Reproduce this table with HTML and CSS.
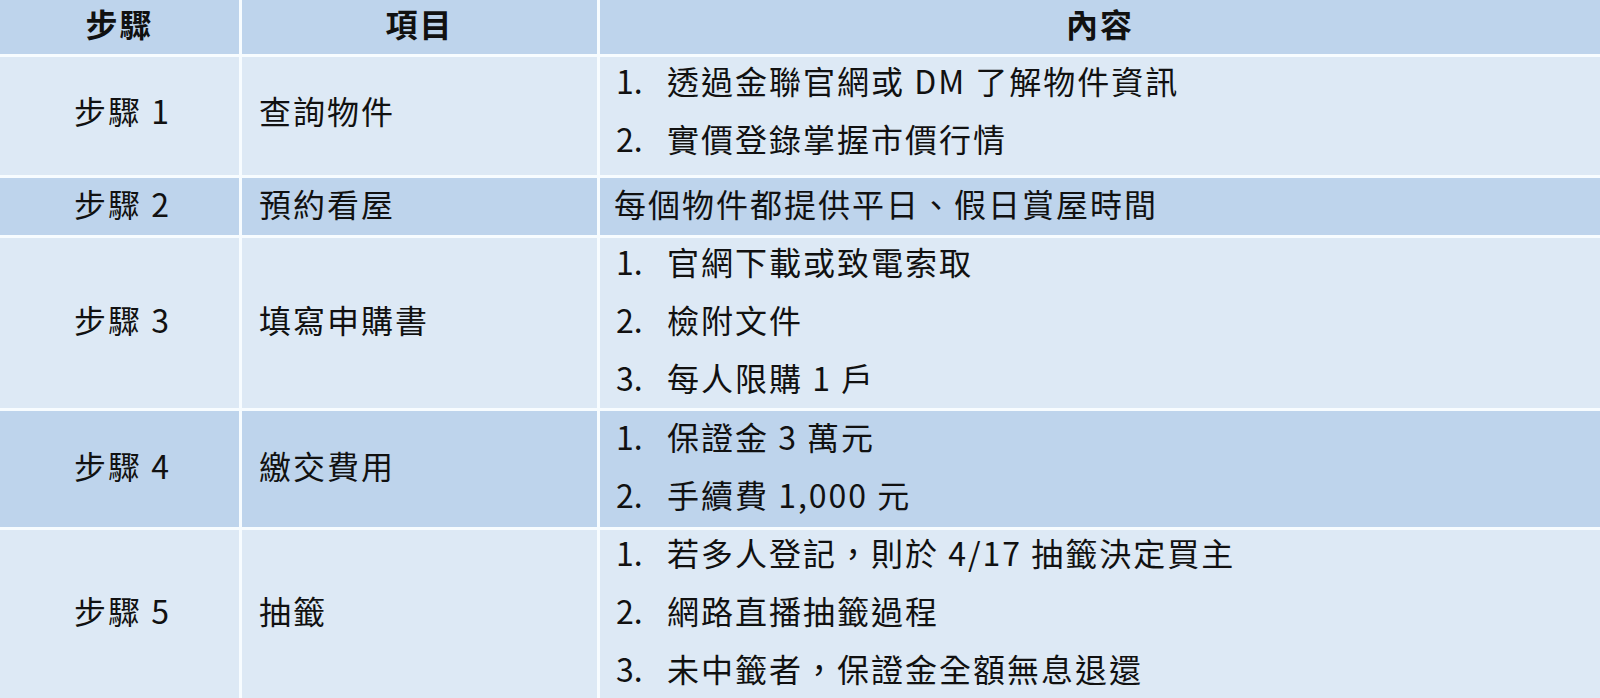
FILE: index.html
```html
<!DOCTYPE html>
<html lang="zh-Hant">
<head>
<meta charset="utf-8">
<title>步驟</title>
<link rel="stylesheet" href="styles.css">
</head>
<body>
<div class="table">
  <div class="cell head">步驟</div>
  <div class="cell head">項目</div>
  <div class="cell head">內容</div>

  <div class="cell light step r1">步驟 1</div>
  <div class="cell light item r1">查詢物件</div>
  <div class="cell light content r1">
    <div class="line"><span class="num">1.</span><span>透過金聯官網或 DM 了解物件資訊</span></div>
    <div class="line"><span class="num">2.</span><span>實價登錄掌握市價行情</span></div>
  </div>

  <div class="cell dark step">步驟 2</div>
  <div class="cell dark item">預約看屋</div>
  <div class="cell dark content">
    <div class="line">每個物件都提供平日、假日賞屋時間</div>
  </div>

  <div class="cell light step">步驟 3</div>
  <div class="cell light item">填寫申購書</div>
  <div class="cell light content">
    <div class="line"><span class="num">1.</span><span>官網下載或致電索取</span></div>
    <div class="line"><span class="num">2.</span><span>檢附文件</span></div>
    <div class="line"><span class="num">3.</span><span>每人限購 1 戶</span></div>
  </div>

  <div class="cell dark step">步驟 4</div>
  <div class="cell dark item">繳交費用</div>
  <div class="cell dark content">
    <div class="line"><span class="num">1.</span><span>保證金 3 萬元</span></div>
    <div class="line"><span class="num">2.</span><span>手續費 1,000 元</span></div>
  </div>

  <div class="cell light step">步驟 5</div>
  <div class="cell light item">抽籤</div>
  <div class="cell light content">
    <div class="line"><span class="num">1.</span><span>若多人登記，則於 4/17 抽籤決定買主</span></div>
    <div class="line"><span class="num">2.</span><span>網路直播抽籤過程</span></div>
    <div class="line"><span class="num">3.</span><span>未中籤者，保證金全額無息退還</span></div>
  </div>
</div>
</body>
</html>
```

FILE: styles.css
```css
html, body {
  margin: 0;
  padding: 0;
  background: #ffffff;
}

body {
  font-family: "Noto Sans CJK TC", "Noto Sans CJK SC", "Noto Sans", sans-serif;
  color: #111111;
  font-size: 32px;
  letter-spacing: 2px;
}

.table {
  display: grid;
  grid-template-columns: 239px 355px 1fr;
  grid-template-rows: 54px 118px 57px 170px 116px 168px;
  gap: 3px;
  width: 1600px;
  height: 698px;
  background: #f7fcff;
  overflow: hidden;
}

.cell {
  display: flex;
  align-items: center;
  box-sizing: border-box;
  padding-bottom: 8px;
}

.head {
  background: #bed4ec;
  justify-content: center;
  font-weight: 700;
  padding-bottom: 8px;
}

.light {
  background: #dde9f5;
}

.dark {
  background: #bed4ec;
}

.step {
  justify-content: center;
  padding-left: 6px;
}

.item {
  padding-left: 17px;
}

.content {
  flex-direction: column;
  align-items: flex-start;
  justify-content: center;
  padding-left: 14px;
}

.r1.content {
  padding-bottom: 14px;
}

.r1.step,
.r1.item {
  padding-bottom: 12px;
}

.line {
  display: flex;
  flex: none;
  height: 58px;
  align-items: center;
  white-space: nowrap;
}

.num {
  width: 53px;
  flex: none;
  padding-left: 2px;
  box-sizing: border-box;
  letter-spacing: 0;
}
```
